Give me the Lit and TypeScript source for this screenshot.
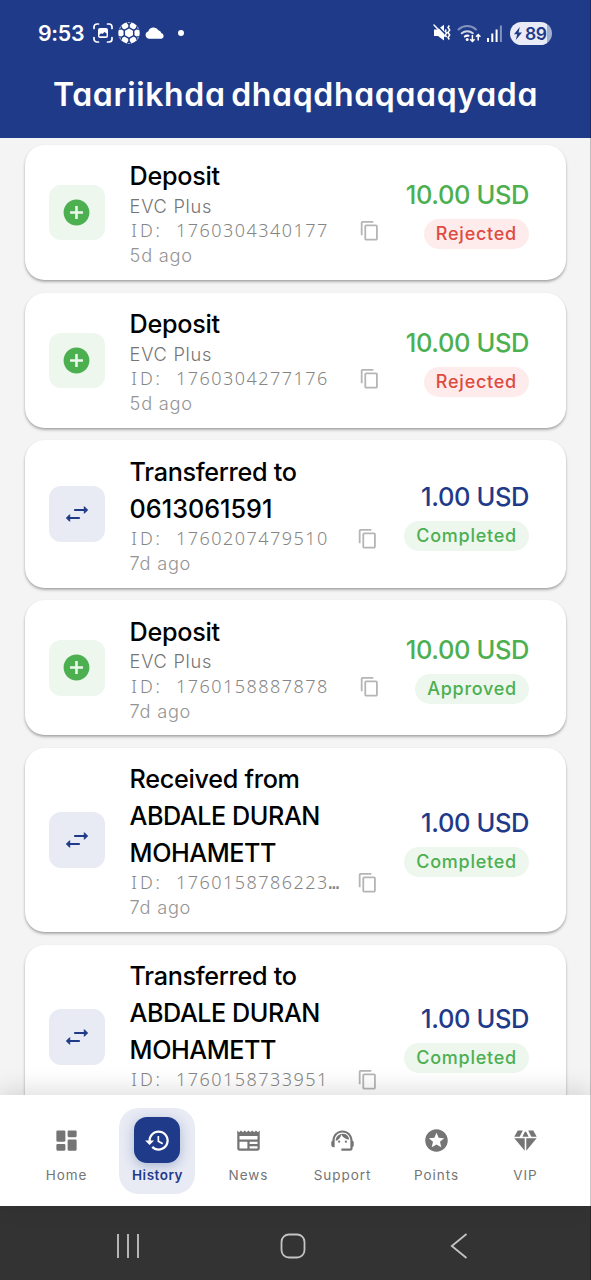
import { LitElement, html, css, svg, nothing } from "lit";
import { customElement, property } from "lit/decorators.js";

type Kind = "deposit" | "transfer";
interface Tx {
  kind: Kind;
  title: string[];
  method?: string;
  id: string;
  ago: string;
  amount: string;
  status: "Rejected" | "Completed" | "Approved";
}

const TRANSACTIONS: Tx[] = [
  { kind: "deposit", title: ["Deposit"], method: "EVC Plus", id: "1760304340177", ago: "5d ago", amount: "10.00 USD", status: "Rejected" },
  { kind: "deposit", title: ["Deposit"], method: "EVC Plus", id: "1760304277176", ago: "5d ago", amount: "10.00 USD", status: "Rejected" },
  { kind: "transfer", title: ["Transferred to", "0613061591"], id: "1760207479510", ago: "7d ago", amount: "1.00 USD", status: "Completed" },
  { kind: "deposit", title: ["Deposit"], method: "EVC Plus", id: "1760158887878", ago: "7d ago", amount: "10.00 USD", status: "Approved" },
  { kind: "transfer", title: ["Received from", "ABDALE DURAN", "MOHAMETT"], id: "1760158786223…", ago: "7d ago", amount: "1.00 USD", status: "Completed" },
  { kind: "transfer", title: ["Transferred to", "ABDALE DURAN", "MOHAMETT"], id: "1760158733951", ago: "7d ago", amount: "1.00 USD", status: "Completed" },
];

const PATHS: Record<string, string> = {
  plus: "M12 2C6.48 2 2 6.48 2 12s4.48 10 10 10 10-4.48 10-10S17.52 2 12 2zm5 11h-4v4h-2v-4H7v-2h4V7h2v4h4v2z",
  copy: "M16 1H4c-1.1 0-2 .9-2 2v14h2V3h12V1zm3 4H8c-1.1 0-2 .9-2 2v14c0 1.1.9 2 2 2h11c1.1 0 2-.9 2-2V7c0-1.1-.9-2-2-2zm0 16H8V7h11v14z",
  home: "M4 3h6a1 1 0 0 1 1 1v8a1 1 0 0 1-1 1H4a1 1 0 0 1-1-1V4a1 1 0 0 1 1-1zM14 3h6a1 1 0 0 1 1 1v4a1 1 0 0 1-1 1h-6a1 1 0 0 1-1-1V4a1 1 0 0 1 1-1zM14 11h6a1 1 0 0 1 1 1v8a1 1 0 0 1-1 1h-6a1 1 0 0 1-1-1v-8a1 1 0 0 1 1-1zM4 15h6a1 1 0 0 1 1 1v4a1 1 0 0 1-1 1H4a1 1 0 0 1-1-1v-4a1 1 0 0 1 1-1z",
  history: "M13 3c-4.970 0-9 4.030-9 9H1l3.890 3.890.07.14L9 12H6c0-3.870 3.130-7 7-7s7 3.130 7 7-3.130 7-7 7c-1.930 0-3.680-.79-4.940-2.060l-1.420 1.420C8.270 19.990 10.510 21 13 21c4.970 0 9-4.030 9-9s-4.030-9-9-9zm-1 5v5l4.280 2.540.72-1.210-3.500-2.080V8H12z",
  news: "m22 3-1.670 1.670L18.670 3 17 4.670 15.330 3l-1.660 1.670L12 3l-1.670 1.670L8.670 3 7 4.670 5.330 3 3.670 4.670 2 3v16c0 1.100.9 2 2 2h16c1.100 0 2-.9 2-2V3zM11 19H4v-6h7v6zm9 0h-7v-2h7v2zm0-4h-7v-2h7v2zm0-4H4V8h16v3z",
  support: "M21 12.220C21 6.730 16.740 3 12 3c-4.690 0-9 3.650-9 9.280-.6.34-1 .98-1 1.720v2c0 1.100.9 2 2 2h1v-6.100c0-3.870 3.130-7 7-7s7 3.130 7 7V19h-8v2h8c1.100 0 2-.9 2-2v-1.220c.59-.31 1-.92 1-1.640v-2.300c0-.7-.41-1.310-1-1.620zM9 12a1 1 0 1 0 0 2 1 1 0 0 0 0-2zM15 12a1 1 0 1 0 0 2 1 1 0 0 0 0-2zM18 11.030A6.040 6.040 0 0 0 12.050 6c-3.030 0-6.290 2.510-6.030 6.450a8.075 8.075 0 0 0 4.860-5.890c1.310 2.630 4 4.440 7.120 4.470z",
  points: "M11.990 2C6.470 2 2 6.480 2 12s4.470 10 9.990 10C17.520 22 22 17.520 22 12S17.520 2 11.990 2zm4.240 16L12 15.450 7.770 18l1.120-4.810-3.730-3.230 4.920-.42L12 5l1.920 4.530 4.920.42-3.730 3.230L16.230 18z",
  vip: "M9.200 8.600h5.600L12.600 4.200h-1.200zM14.400 3 17.200 8.600H22L18.900 3zM9.600 3H5.100L2 8.600h4.800zM2.100 10 11.300 21V10zM12.700 21 21.900 10H12.700z",
};

const icon = (name: string) => svg`<svg class="icon" viewBox="0 0 24 24"><path d=${PATHS[name]}></path></svg>`;

@customElement("status-bar")
class StatusBar extends LitElement {
  static styles = css`
    :host { display: flex; align-items: center; height: 66px; padding: 0 39px 0 38px; box-sizing: border-box; color: #fff; }
    svg { display: block; fill: currentColor; flex: none; }
    .time { font-size: 21.300px; font-weight: 600; letter-spacing: -.3px; width: 55px; }
    .left { display: flex; align-items: center; }
    .right { display: flex; align-items: center; margin-left: auto; }
    .frame { margin-right: 5px; }
    .ball { margin-right: 5px; }
    .cloud { margin-right: 13px; }
    .dot { width: 6px; height: 6px; border-radius: 50%; background: #fff; }
    .mute { margin-right: 6px; }
    .wifi { margin-right: 5px; }
    .signal { margin-right: 8px; }
    .battery { display: flex; align-items: center; gap: 3px; width: 42px; height: 23px; padding-left: 4px; box-sizing: border-box; border-radius: 12px; color: #1f3a89; background: linear-gradient(90deg, #e9ebf6 0 88%, #a3aed1 88%); font-size: 17.500px; font-weight: 600; line-height: 23px; letter-spacing: -.5px; }
  `;
  render() {
    const seams = [0, 1, 2, 3, 4, 5].map(
      (i) => svg`<path transform=${`rotate(${i * 60} 11 11)`} d="M11 5.800V3M9.200 .6 11 2.600 12.800 .6"></path>`
    );
    return html`
      <div class="left">
        <span class="time">9:53</span>
        <svg class="frame" width="20" height="20" viewBox="0 0 20 20">
          <path fill="none" stroke="#fff" stroke-width="1.700" stroke-linecap="round" d="M1 5.500V4a3 3 0 0 1 3-3h1.500M14.500 1H16a3 3 0 0 1 3 3v1.500M19 14.500V16a3 3 0 0 1-3 3h-1.500M5.500 19H4a3 3 0 0 1-3-3v-1.500"></path>
          <path fill-rule="evenodd" d="M7 5h6a2 2 0 0 1 2 2v6a2 2 0 0 1-2 2H7a2 2 0 0 1-2-2V7a2 2 0 0 1 2-2zM6.400 13.200h7.200V10.500l-2-1.500-2.300 2-1.200-.8-1.700 1.600z"></path>
        </svg>
        <svg class="ball" width="22" height="22" viewBox="0 0 22 22">
          <circle cx="11" cy="11" r="10.700"></circle>
          <g fill="none" stroke="#1f3a89" stroke-width="1.500">
            ${seams}
            <path d="M11 5.700 15.700 8.350V13.650L11 16.300 6.300 13.650V8.350Z"></path>
          </g>
        </svg>
        <svg class="cloud" width="20" height="12" viewBox="0 0 20 12">
          <path d="M3.800 11.700A3.700 3.700 0 0 1 3.200 4.500 5.600 5.600 0 0 1 13.400 3.200 3.800 3.800 0 0 1 16.300 6 3 3 0 0 1 16.800 11.700Z"></path>
        </svg>
        <span class="dot"></span>
      </div>
      <div class="right">
        <svg class="mute" width="18" height="18" viewBox="0 0 18 18">
          <path d="M1 5.500h3.500L11 .8V16.500L5 12H1Z"></path>
          <path stroke="#1f3a89" stroke-width="1.600" d="M2.700 .2 12.500 10.200"></path>
          <path stroke="#fff" stroke-width="1.500" stroke-linecap="round" d="M1 1 11.500 12"></path>
          <path fill="none" stroke="#fff" stroke-width="1.500" d="M13.300 5.500l-1.200 1.600 1.700 1.900-1.700 2 1.500 2M16.300 1.500l-1.300 2 1.700 2.500-1.700 2.500 1.700 2.500-1.700 2.500 1.300 2"></path>
        </svg>
        <svg class="wifi" width="25" height="19" viewBox="0 0 25 19">
          <g fill="none" stroke="#fff" stroke-width="2" stroke-linecap="round">
            <path opacity=".45" d="M1.500 5.500A13 13 0 0 1 19 5.500"></path>
            <path opacity=".8" d="M4.700 9.300A8.500 8.500 0 0 1 15.800 9.300"></path>
            <path d="M7.800 12.600A4 4 0 0 1 11.500 11.800"></path>
          </g>
          <circle cx="10.200" cy="15.600" r="1.500"></circle>
          <path fill="none" stroke="#fff" stroke-width="1.500" d="M15.400 11v6.500M13.200 15.300l2.200 2.200 2.200-2.200M21.200 16.500V10.500M19 12.700l2.200-2.200 2.200 2.200"></path>
        </svg>
        <svg class="signal" width="15" height="17" viewBox="0 0 15 17">
          <path d="M0 13h2v4H0zM4.300 8.500h2V17h-2zM8.600 4.500h2V17h-2z"></path><path opacity=".45" d="M12.900 .5h2V17h-2z"></path>
        </svg>
        <span class="battery">
          <svg width="8" height="13" viewBox="0 0 8 13"><path d="M5.800 0 0 7.300H3.200L1.800 13 8 5.400H4.600Z"></path></svg>89
        </span>
      </div>`;
  }
}

@customElement("tx-card")
class TxCard extends LitElement {
  @property({ attribute: false }) tx!: Tx;
  static styles = css`
    :host { display: flex; align-items: center; box-sizing: border-box; padding: 12.300px 37px 12.300px 24.500px; background: #fff; border-radius: 19.700px; box-shadow: 0 2px 3px rgba(0, 0, 0, .26), 0 1px 2px rgba(0, 0, 0, .1); flex: none; }
    .tile { width: 55.500px; height: 55.500px; border-radius: 12px; display: grid; place-items: center; flex: none; margin-right: 25px; }
    .tile svg { display: block; }
    .deposit .icon { width: 31px; height: 31px; fill: #4caf50; }
    .deposit { background: #edf7ee; }
    .transfer { background: #e8ebf4; }
    .info { flex: 1; min-width: 0; }
    .title { height: 36.900px; font-size: 25.200px; line-height: 38.300px; font-weight: 500; letter-spacing: -.3px; color: #000; white-space: nowrap; }
    .title.caps { letter-spacing: -.45px; }
    .title.digits { letter-spacing: 0; }
    .sub { font-size: 18.200px; line-height: 24.600px; letter-spacing: .75px; font-weight: 350; color: #949494; white-space: nowrap; }
    .sub.method { color: #757575; }
    .idrow { display: flex; align-items: center; height: 24.600px; }
    .mono { display: flex; width: 231px; margin-left: -1.300px; font-family: "Noto Sans", sans-serif; font-size: 18px; font-weight: 300; line-height: 23.600px; color: #858585; }
    .transferred .mono { width: 228.500px; }
    .mono span { width: 11.750px; text-align: center; flex: none; }
    .mono .tight { font-family: "DejaVu Sans Mono", monospace; }
    .idrow .icon { width: 21.500px; height: 21.500px; fill: #b5b5b5; flex: none; }
    .end { display: flex; flex-direction: column; align-items: flex-end; flex: none; gap: 6px; }
    .amount { font-size: 25.500px; line-height: 37px; font-weight: 500; letter-spacing: -.4px; color: #4caf50; white-space: nowrap; }
    .end .blue { color: #1f3a89; }
    .badge { font-size: 18px; line-height: 30px; padding: 0 12px; border-radius: 15px; font-weight: 500; letter-spacing: .75px; background: #edf7ee; color: #4caf50; }
    .badge.rejected { background: #fdeceb; color: #dd4b41; }
  `;
  render() {
    const { kind, title, method, id, ago, amount, status } = this.tx;
    const shape = (line: string) => (/^\d+$/.test(line) ? "digits" : line === line.toUpperCase() ? "caps" : "");
    return html`
      <div class="tile ${kind}">
        ${kind === "deposit"
          ? icon("plus")
          : html`<svg width="24" height="18" viewBox="0 0 24 18"><path fill="none" stroke="#1f3a89" stroke-width="2.200" stroke-linecap="round" d="M10 5H20M14 13H4"></path><path fill="#1f3a89" stroke="#1f3a89" stroke-linejoin="round" d="M19.300 1.700 22.600 5 19.300 8.300ZM4.700 9.700 1.400 13 4.700 16.300Z"></path></svg>`}
      </div>
      <div class="info ${kind === "transfer" ? "transferred" : ""}">
        ${title.map((line) => html`<div class="title ${shape(line)}">${line}</div>`)}
        ${method ? html`<div class="sub method">${method}</div>` : nothing}
        <div class="idrow"><div class="mono">${[..."ID: " + id].map((c) => html`<span class=${c === "…" ? "tight" : ""}>${c}</span>`)}</div>${icon("copy")}</div>
        <div class="sub">${ago}</div>
      </div>
      <div class="end">
        <div class="amount ${kind === "transfer" ? "blue" : ""}">${amount}</div>
        <div class="badge ${status.toLowerCase()}">${status}</div>
      </div>`;
  }
}

@customElement("app-root")
class AppRoot extends LitElement {
  static styles = css`
    :host { display: flex; flex-direction: column; position: relative; width: 591px; height: 1280px; overflow: hidden; background: #f4f4f4; font-family: Inter, "Noto Sans", sans-serif; }
    header { height: 138px; background: #1f3a89; flex: none; }
    h1 { margin: 0; height: 60px; line-height: 58px; text-align: center; color: #fff; font-size: 32px; font-weight: 600; letter-spacing: .65px; word-spacing: -3px; font-feature-settings: "cv11"; white-space: nowrap; }
    main { flex: 1; min-height: 0; overflow: hidden; display: flex; flex-direction: column; gap: 12.350px; padding: 7.100px 25px 0 24.600px; }
    .tabs { position: relative; display: grid; grid-template-columns: 76px 76px 76px 82px 76px 72px; column-gap: 15px; justify-content: start; height: 111px; flex: none; background: #fff; box-shadow: 0 -4px 24px rgba(0, 0, 0, .14); box-sizing: border-box; padding: 13px 0 0 28px; }
    .tab { display: flex; flex-direction: column; align-items: center; height: 86px; box-sizing: border-box; padding-top: 9px; border-radius: 20px; font-size: 13.500px; letter-spacing: .95px; color: #757575; }
    .glyph { width: 46px; height: 46px; border-radius: 13px; display: grid; place-items: center; }
    .glyph .icon { width: 27px; height: 27px; fill: currentColor; display: block; }
    .label { line-height: 18px; margin: 3px 0 0 1px; }
    .active { background: #e8ebf4; color: #1f3a89; font-weight: 600; letter-spacing: .5px; }
    .active .glyph { background: #1f3a89; color: #fff; box-shadow: 0 3px 12px rgba(31, 58, 137, .3); }
    .system { display: flex; align-items: center; height: 74px; padding: 5px 123px 0 116px; box-sizing: border-box; background: #333; flex: none; }
    .system svg { display: block; fill: none; stroke: #c4c4c4; stroke-width: 1.800; }
    .system .circle { margin-left: 140px; margin-right: auto; }
    .edge { position: absolute; right: 0; top: 0; width: 1px; height: 100%; background: rgba(0, 0, 0, .22); }
  `;
  render() {
    const tabs = [["Home", "home"], ["History", "history"], ["News", "news"], ["Support", "support"], ["Points", "points"], ["VIP", "vip"]];
    return html`
      <header><status-bar></status-bar><h1>Taariikhda dhaqdhaqaaqyada</h1></header>
      <main>${TRANSACTIONS.map((tx) => html`<tx-card .tx=${tx}></tx-card>`)}</main>
      <nav class="tabs">
        ${tabs.map(([label, name]) => html`<div class="tab ${label === "History" ? "active" : ""}"><span class="glyph">${icon(name)}</span><span class="label">${label}</span></div>`)}
      </nav>
      <div class="system">
        <svg width="24" height="26" viewBox="0 0 24 26"><path d="M2 1v24M12 1v24M22 1v24"></path></svg>
        <svg class="circle" width="26" height="26" viewBox="0 0 26 26"><rect x="1.500" y="1.500" width="23" height="23" rx="7.500"></rect></svg>
        <svg width="18" height="26" viewBox="0 0 18 26"><path d="M16.500 1 1.800 13l14.700 12"></path></svg>
      </div>
      <div class="edge"></div>`;
  }
}
